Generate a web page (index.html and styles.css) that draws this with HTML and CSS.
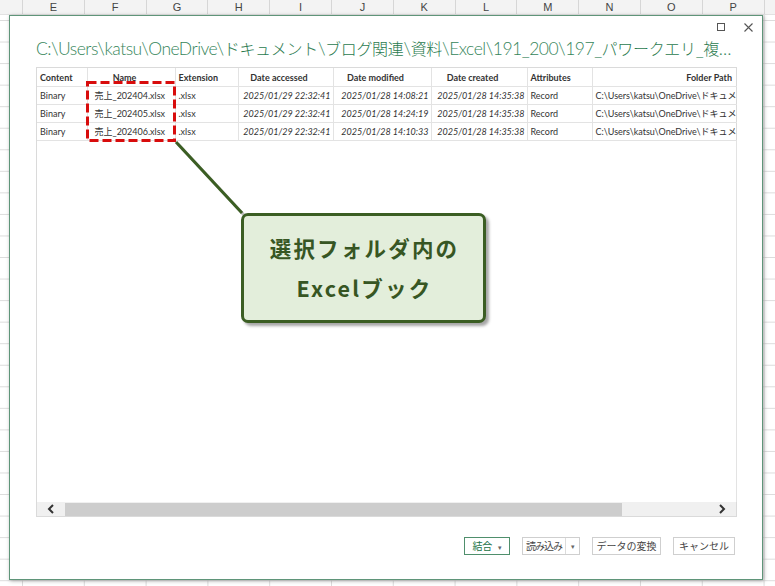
FILE: index.html
```html
<!DOCTYPE html>
<html lang="ja">
<head>
<meta charset="utf-8">
<title>Folder preview</title>
<link rel="stylesheet" href="styles.css">
</head>
<body>
<div class="sheet">
  <div class="colheads">
    <div class="colhead first"></div>
    <div class="colhead">E</div><div class="colhead">F</div><div class="colhead">G</div><div class="colhead">H</div>
    <div class="colhead">I</div><div class="colhead">J</div><div class="colhead">K</div><div class="colhead">L</div>
    <div class="colhead">M</div><div class="colhead">N</div><div class="colhead">O</div><div class="colhead">P</div>
    <div class="colhead last"></div>
  </div>
  <div class="cells"></div>
</div>

<div class="dialog">
  <div class="chrome">
    <span class="maxbox"></span>
    <svg class="closex" width="9" height="9" viewBox="0 0 9 9"><path d="M0.5 0.5L8.5 8.5M8.5 0.5L0.5 8.5" stroke="#555" stroke-width="1.1" fill="none"/></svg>
  </div>
  <div class="title">C:\Users\katsu\OneDrive\<span class="jp">ドキュメント</span>\<span class="jp">ブログ関連</span>\<span class="jp">資料</span>\Excel\191_200\197_<span class="jp">パワークエリ</span>_<span class="jp">複数ファイルの結合</span></div>
  <div class="preview">
    <table class="grid">
      <colgroup>
        <col class="c1"><col class="c2"><col class="c3"><col class="c4"><col class="c5"><col class="c6"><col class="c7"><col class="c8">
      </colgroup>
      <thead>
        <tr>
          <th class="left">Content</th>
          <th class="mid">Name</th>
          <th class="left">Extension</th>
          <th class="mid">Date accessed</th>
          <th class="mid">Date modified</th>
          <th class="mid">Date created</th>
          <th class="left">Attributes</th>
          <th class="right">Folder Path</th>
        </tr>
      </thead>
      <tbody>
        <tr>
          <td>Binary</td><td class="nm">売上_202404.xlsx</td><td>.xlsx</td>
          <td class="dt">2025/01/29 22:32:41</td><td class="dt">2025/01/28 14:08:21</td><td class="dt">2025/01/28 14:35:38</td>
          <td>Record</td><td class="fp">C:\Users\katsu\OneDrive\ドキュメント\ブログ関連</td>
        </tr>
        <tr>
          <td>Binary</td><td class="nm">売上_202405.xlsx</td><td>.xlsx</td>
          <td class="dt">2025/01/29 22:32:41</td><td class="dt">2025/01/28 14:24:19</td><td class="dt">2025/01/28 14:35:38</td>
          <td>Record</td><td class="fp">C:\Users\katsu\OneDrive\ドキュメント\ブログ関連</td>
        </tr>
        <tr>
          <td>Binary</td><td class="nm">売上_202406.xlsx</td><td>.xlsx</td>
          <td class="dt">2025/01/29 22:32:41</td><td class="dt">2025/01/28 14:10:33</td><td class="dt">2025/01/28 14:35:38</td>
          <td>Record</td><td class="fp">C:\Users\katsu\OneDrive\ドキュメント\ブログ関連</td>
        </tr>
      </tbody>
    </table>
    <div class="spacer"></div>
    <div class="hscroll">
      <div class="arrow">
        <svg width="8" height="10" viewBox="0 0 8 10"><path d="M6 1L2 5L6 9" stroke="#333" stroke-width="2" fill="none"/></svg>
      </div>
      <div class="track"><div class="thumb"></div></div>
      <div class="arrow">
        <svg width="8" height="10" viewBox="0 0 8 10"><path d="M2 1L6 5L2 9" stroke="#333" stroke-width="2" fill="none"/></svg>
      </div>
    </div>
  </div>
  <div class="buttons">
    <button class="btn primary">結合 <span class="caret">▾</span></button>
    <div class="btn split"><span class="main">読み込み</span><span class="drop">▾</span></div>
    <button class="btn wide">データの変換</button>
    <button class="btn cancel">キャンセル</button>
  </div>
</div>

<svg class="marker" width="100" height="70" viewBox="0 0 100 70">
  <rect x="1.5" y="1.5" width="87" height="58" fill="none" stroke="#d80c0c" stroke-width="3" stroke-dasharray="9 4"/>
</svg>

<svg class="connector" width="90" height="90" viewBox="0 0 90 90">
  <line x1="8" y1="9" x2="74" y2="80" stroke="rgba(0,0,0,0.25)" stroke-width="3"/>
  <line x1="6" y1="7" x2="72" y2="78" stroke="#3b5e23" stroke-width="3"/>
</svg>

<div class="callout">
  <div class="line">選択フォルダ内の</div>
  <div class="line">Excelブック</div>
</div>
</body>
</html>
```

FILE: styles.css
```css
html, body {
  margin: 0;
  padding: 0;
}
body {
  width: 775px;
  height: 586px;
  overflow: hidden;
  position: relative;
  background: #fff;
  font-family: "Lato", "Noto Sans CJK JP", sans-serif;
}

/* Excel sheet behind the dialog */
.sheet {
  display: flex;
  flex-direction: column;
  height: 586px;
}
.colheads {
  display: flex;
  height: 15px;
  background: #f3f3f3;
  border-bottom: 1px solid #e2e2e2;
  box-sizing: border-box;
}
.colhead {
  flex: 0 0 61.8px;
  box-sizing: border-box;
  border-left: 1px solid #d6d6d6;
  text-align: center;
  font-size: 11px;
  line-height: 14px;
  color: #444;
  font-family: "Liberation Sans", sans-serif;
}
.colhead.first {
  flex-basis: 22px;
  border-left: none;
}
.colhead.last {
  flex: 1 1 auto;
}
.cells {
  flex: 1 1 auto;
  background-image:
    linear-gradient(to right, #dcdcdc 1px, transparent 1px),
    linear-gradient(to bottom, #dcdcdc 1px, transparent 1px);
  background-size: 61.8px 100%, 100% 21.55px;
  background-position: 22px 0, 0 5px;
}

/* Dialog */
.dialog {
  position: absolute;
  left: 9px;
  top: 15px;
  width: 754px;
  height: 565px;
  box-sizing: border-box;
  background: #fff;
  border: 1px solid #5f9579;
  box-shadow: 1px 1px 4px rgba(0, 0, 0, 0.3);
  padding: 0 25px 0 26px;
  display: flex;
  flex-direction: column;
}
.chrome {
  height: 22px;
  display: flex;
  justify-content: flex-end;
  align-items: center;
  gap: 19px;
  margin-right: -16px;
}
.maxbox {
  width: 8px;
  height: 8px;
  border: 1px solid #555;
  box-sizing: border-box;
}
.closex {
  display: block;
}
.title {
  height: 22px;
  font-size: 17.5px;
  line-height: 22px;
  font-weight: 300;
  letter-spacing: -0.5px;
  color: #35855a;
  white-space: nowrap;
  overflow: hidden;
  text-overflow: ellipsis;
  margin-bottom: 7px;
  margin-right: 4px;
}
.title .jp {
  font-size: 16px;
  letter-spacing: -0.3px;
  color: #2a7a4e;
}
.preview {
  height: 450px;
  box-sizing: border-box;
  border: 1px solid #dadada;
  display: flex;
  flex-direction: column;
}
.grid {
  table-layout: fixed;
  border-collapse: collapse;
  width: 700px;
  font-size: 9px;
  color: #333;
}
.grid col.c1 { width: 50px; }
.grid col.c2 { width: 88px; }
.grid col.c3 { width: 63px; }
.grid col.c4 { width: 95px; }
.grid col.c5 { width: 98px; }
.grid col.c6 { width: 96px; }
.grid col.c7 { width: 65px; }
.grid col.c8 { width: 145px; }
.grid th {
  height: 18px;
  padding: 0 3px;
  font-weight: bold;
  border-right: 1px solid #e3e3e3;
  border-bottom: 1px solid #e3e3e3;
  white-space: nowrap;
  overflow: hidden;
}
.grid th.left { text-align: left; }
.grid th.mid { text-align: center; padding-right: 16px; }
.grid th.right { text-align: right; padding-right: 5px; border-right: none; }
.grid td {
  height: 17px;
  padding: 0 3px;
  border-right: 1px solid #e3e3e3;
  border-bottom: 1px solid #e3e3e3;
  white-space: nowrap;
  overflow: hidden;
}
.grid td.nm { padding-left: 7px; }
.grid td.dt { font-style: italic; text-align: right; padding-right: 2px; }
.grid td.fp { text-overflow: clip; border-right: none; }
.spacer {
  flex: 1 1 auto;
  border-right: 1px solid #e3e3e3;
  width: 700px;
  box-sizing: border-box;
}
.hscroll {
  height: 14px;
  display: flex;
  align-items: stretch;
  background: #f0f0f0;
}
.arrow {
  flex: 0 0 28px;
  display: flex;
  align-items: center;
  justify-content: center;
}
.track {
  flex: 1 1 auto;
  display: flex;
  align-items: stretch;
  padding: 1px 0 0;
}
.thumb {
  width: 557px;
  background: #cdcdcd;
}

/* Buttons */
.buttons {
  margin-top: 20px;
  display: flex;
  justify-content: flex-end;
  gap: 12px;
  margin-right: 2px;
}
.btn {
  height: 18px;
  box-sizing: border-box;
  border: 1px solid #cfcfcf;
  background: #fff;
  font-family: "Noto Sans CJK JP", sans-serif;
  font-size: 10px;
  line-height: 16px;
  color: #444;
  padding: 0;
  text-align: center;
}
.btn.primary {
  width: 46px;
  border-color: #4f8f6c;
  color: #217346;
}
.caret {
  font-size: 7px;
  color: #666;
  margin-left: 3px;
}
.btn.split {
  width: 58px;
  display: flex;
}
.split .main {
  flex: 1 1 auto;
  border-right: 1px solid #dcdcdc;
  letter-spacing: -1px;
}
.split .drop {
  flex: 0 0 13px;
  font-size: 7px;
  color: #666;
}
.btn.wide { width: 69px; }
.btn.cancel { width: 62px; }

/* Annotation overlays */
.marker {
  position: absolute;
  left: 86px;
  top: 81px;
}
.connector {
  position: absolute;
  left: 170px;
  top: 135px;
}
.callout {
  position: absolute;
  left: 241px;
  top: 213px;
  width: 245px;
  height: 110px;
  box-sizing: border-box;
  border: 3px solid #3b5e23;
  border-radius: 7px;
  background: #e3eedb;
  box-shadow: 3px 3px 3px rgba(0, 0, 0, 0.35);
  display: flex;
  flex-direction: column;
  justify-content: center;
  align-items: center;
  font-family: "Noto Sans CJK JP", sans-serif;
  font-weight: bold;
  font-size: 21.5px;
  line-height: 40px;
  letter-spacing: 2.2px;
  color: #375623;
}
.callout .line {
  padding-left: 2px;
}
```
